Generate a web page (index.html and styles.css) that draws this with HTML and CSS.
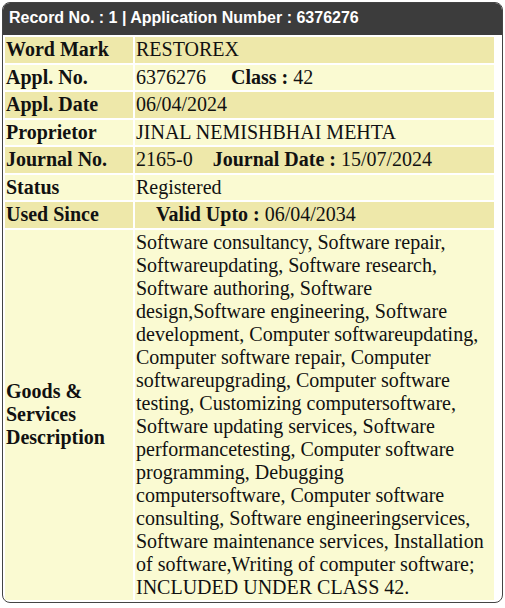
FILE: index.html
```html
<!DOCTYPE html>
<html>
<head>
<meta charset="utf-8">
<link rel="stylesheet" href="styles.css">
</head>
<body>
<div class="record">
  <div class="record-head">Record No. : 1 | Application Number : 6376276</div>
  <table class="details">
    <colgroup><col class="col-label"><col class="col-value"></colgroup>
    <tr class="dark"><th>Word Mark</th><td>RESTOREX</td></tr>
    <tr class="light"><th>Appl. No.</th><td>6376276&nbsp;&nbsp;&nbsp;&nbsp;&nbsp;<b>Class : </b>42</td></tr>
    <tr class="dark"><th>Appl. Date</th><td>06/04/2024</td></tr>
    <tr class="light"><th>Proprietor</th><td>JINAL NEMISHBHAI MEHTA</td></tr>
    <tr class="dark"><th>Journal No.</th><td>2165-0&nbsp;&nbsp;&nbsp;&nbsp;<b>Journal Date : </b>15/07/2024</td></tr>
    <tr class="light"><th>Status</th><td>Registered</td></tr>
    <tr class="dark"><th>Used Since</th><td>&nbsp;&nbsp;&nbsp;&nbsp;<b>Valid Upto : </b>06/04/2034</td></tr>
    <tr class="light"><th>Goods &amp; Services Description</th><td>Software consultancy, Software repair, Softwareupdating, Software research, Software authoring, Software design,Software engineering, Software development, Computer softwareupdating, Computer software repair, Computer softwareupgrading, Computer software testing, Customizing computersoftware, Software updating services, Software performancetesting, Computer software programming, Debugging computersoftware, Computer software consulting, Software engineeringservices, Software maintenance services, Installation of software,Writing of computer software; INCLUDED UNDER CLASS 42.</td></tr>
  </table>
</div>
</body>
</html>
```
FILE: styles.css
```css
html, body {
  margin: 0;
  padding: 0;
  background: #ffffff;
}
.record {
  margin: 2px;
  width: 499px;
  border: 1px solid #444444;
  border-radius: 8px;
  overflow: hidden;
  background: #ffffff;
}
.record-head {
  background: #3c3c3c;
  color: #ffffff;
  font-family: "Liberation Sans", Arial, sans-serif;
  font-weight: bold;
  font-size: 16px;
  height: 32px;
  line-height: 30px;
  padding-left: 6px;
  box-sizing: border-box;
}
.details {
  width: 493px;
  margin-left: 0;
  border-collapse: separate;
  border-spacing: 2px;
  table-layout: fixed;
  font-family: "Liberation Serif", "Times New Roman", serif;
  font-size: 20px;
  color: #111111;
  line-height: 23px;
}
.col-label { width: 128px; }
.details th, .details td {
  padding: 1.25px 1px 1.25px 1px;
  vertical-align: middle;
}
.details th {
  text-align: left;
  font-weight: bold;
}
.details td b { font-weight: bold; }
.dark th, .dark td { background: #eee8aa; }
.light th, .light td { background: #fafad2; }
```
